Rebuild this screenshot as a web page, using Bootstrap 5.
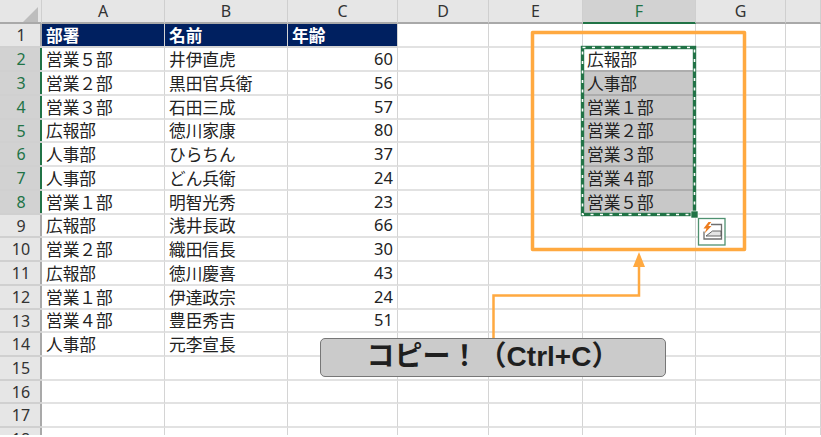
<!doctype html>
<html lang="ja"><head><meta charset="utf-8">
<link rel="stylesheet" href="https://cdn.jsdelivr.net/npm/bootstrap@5.3.0/dist/css/bootstrap.min.css">
<style>
html,body{margin:0;background:#fff;overflow:hidden}
.stage{width:821px;height:435px;overflow:hidden}
.sheet{table-layout:fixed;width:821px;border-collapse:separate;border-spacing:0;font-family:"Noto Sans CJK JP","Noto Sans",sans-serif;font-size:16.7px;line-height:1;color:#222}
.sheet th,.sheet td{padding:0;vertical-align:middle;white-space:nowrap}
.sheet tr{height:24px}
.sheet tr.sh{height:23px}
.sheet td{border-right:1px solid #d4d4d4;border-bottom:2px solid #e2e2e2;padding:0 4px 0 4px;background:#fff}
.sheet thead th{height:24px;background:#e6e6e6;border-right:1px solid #cfcfcf;border-bottom:2px solid #a9a9a9;font:400 16px/1 "Noto Sans",sans-serif;text-align:center;color:#333}
.sheet tbody th{background:#e6e6e6;box-shadow:inset -2px 0 0 #a9a9a9;border-bottom:2px solid #d0d0d0;font:400 16px/1 "Noto Sans",sans-serif;text-align:center;color:#333}
.tri{display:block;width:0;height:0;margin:6px 3px 0 auto;border-style:solid;border-width:0 0 15px 15px;border-color:transparent transparent #bdbdbd transparent}
.sheet thead th.onf{background:#d2d2d2;color:#217346;border-bottom-color:#217346}
.sheet tbody th.onr{background:#d2d2d2;color:#217346;box-shadow:inset -2px 0 0 #217346}
.sheet td.hd{background:#002060;color:#fff;font-weight:700;border-right-color:#d4d4d4;border-bottom-color:#d4d4d4}
.sheet td.num{text-align:right;font:400 16.5px/1 "Noto Sans",sans-serif}
.sheet td.sel{background:#c8c8c8;border-right-color:#c8c8c8;border-bottom-color:#adadad}
.sheet td.selw{border-bottom-color:#adadad}
.overlay{position:absolute;left:0;top:0;pointer-events:none}
.callout{position:absolute;left:320px;top:338px;width:346px;height:39px;background:#cbcbcb;border:1.5px solid #777;border-radius:5px;font:700 28px/36px "Liberation Sans","Noto Sans CJK JP",sans-serif;color:#1f1f1f;text-align:center}
.colh{width:42px}.ca{width:123px}.cb{width:123px}.cc{width:110px}.cd{width:91px}.ce{width:94px}.cf{width:113px}.cg{width:90px}
</style></head>
<body>
<div class="stage position-relative">
<table class="sheet mb-0">
<colgroup><col class="colh"><col class="ca"><col class="cb"><col class="cc"><col class="cd"><col class="ce"><col class="cf"><col class="cg"><col></colgroup>
<thead><tr><th><span class="tri"></span></th><th>A</th><th>B</th><th>C</th><th>D</th><th>E</th><th class="onf">F</th><th>G</th><th></th></tr></thead>
<tbody>
<tr><th>1</th><td class="hd">部署</td><td class="hd">名前</td><td class="hd">年齢</td><td></td><td></td><td></td><td></td><td></td></tr>
<tr><th class="onr">2</th><td>営業５部</td><td>井伊直虎</td><td class="num">60</td><td></td><td></td><td class="selw">広報部</td><td></td><td></td></tr>
<tr><th class="onr">3</th><td>営業２部</td><td>黒田官兵衛</td><td class="num">56</td><td></td><td></td><td class="sel">人事部</td><td></td><td></td></tr>
<tr><th class="onr">4</th><td>営業３部</td><td>石田三成</td><td class="num">57</td><td></td><td></td><td class="sel">営業１部</td><td></td><td></td></tr>
<tr class="sh"><th class="onr">5</th><td>広報部</td><td>徳川家康</td><td class="num">80</td><td></td><td></td><td class="sel">営業２部</td><td></td><td></td></tr>
<tr><th class="onr">6</th><td>人事部</td><td>ひらちん</td><td class="num">37</td><td></td><td></td><td class="sel">営業３部</td><td></td><td></td></tr>
<tr><th class="onr">7</th><td>人事部</td><td>どん兵衛</td><td class="num">24</td><td></td><td></td><td class="sel">営業４部</td><td></td><td></td></tr>
<tr><th class="onr">8</th><td>営業１部</td><td>明智光秀</td><td class="num">23</td><td></td><td></td><td class="sel">営業５部</td><td></td><td></td></tr>
<tr class="sh"><th>9</th><td>広報部</td><td>浅井長政</td><td class="num">66</td><td></td><td></td><td></td><td></td><td></td></tr>
<tr><th>10</th><td>営業２部</td><td>織田信長</td><td class="num">30</td><td></td><td></td><td></td><td></td><td></td></tr>
<tr><th>11</th><td>広報部</td><td>徳川慶喜</td><td class="num">43</td><td></td><td></td><td></td><td></td><td></td></tr>
<tr><th>12</th><td>営業１部</td><td>伊達政宗</td><td class="num">24</td><td></td><td></td><td></td><td></td><td></td></tr>
<tr class="sh"><th>13</th><td>営業４部</td><td>豊臣秀吉</td><td class="num">51</td><td></td><td></td><td></td><td></td><td></td></tr>
<tr><th>14</th><td>人事部</td><td>元李宣長</td><td class="num"></td><td></td><td></td><td></td><td></td><td></td></tr>
<tr><th>15</th><td></td><td></td><td></td><td></td><td></td><td></td><td></td><td></td></tr>
<tr class="sh"><th>16</th><td></td><td></td><td></td><td></td><td></td><td></td><td></td><td></td></tr>
<tr><th>17</th><td></td><td></td><td></td><td></td><td></td><td></td><td></td><td></td></tr>
<tr><th>18</th><td></td><td></td><td></td><td></td><td></td><td></td><td></td><td></td></tr>
</tbody></table>
<svg class="overlay" width="821" height="437" viewBox="0 0 821 437" fill="none">
<rect x="532.5" y="32.5" width="212" height="217" stroke="#ffa940" stroke-width="3.5" stroke-linejoin="round"/>
<path d="M493.5 338V295.5H639V262" stroke="#ffa940" stroke-width="2.5"/>
<path d="M639 252l6 15h-12z" fill="#ffa940"/>
<rect x="582.5" y="47.5" width="112" height="167" stroke="#217346" stroke-width="3.4"/>
<rect x="582.5" y="47.5" width="112" height="167" stroke="#fff" stroke-width="1.6" stroke-dasharray="3 6.5"/>
<rect x="691" y="211" width="7" height="7" fill="#217346" stroke="#fff" stroke-width="0.6"/>
<rect x="698.5" y="218.5" width="26.5" height="26.5" fill="#fff" stroke="#4f9170" stroke-width="1.3"/>
<path d="M711 224.5h10.5v14.5h-17.5v-7.5" stroke="#6e6e6e" stroke-width="1.3"/>
<path d="M706 236h15v-5h-8.5z" fill="#e4e4e4" stroke="#555" stroke-width="0.9"/>
<path d="M708.5 222l-5 6.5h3l-2 5 7-7.5h-3.2l3-4z" fill="#ed7d1f"/>
</svg>
<div class="callout">コピー！（Ctrl+C）</div>
</div>
<script src="https://cdn.jsdelivr.net/npm/bootstrap@5.3.0/dist/js/bootstrap.bundle.min.js"></script>
</body></html>
